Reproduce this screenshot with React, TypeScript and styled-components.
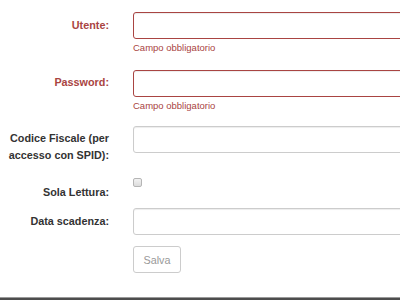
import React from "react";
import styled, { createGlobalStyle } from "styled-components";

const GlobalStyle = createGlobalStyle`
    html, body {
        margin: 0;
        padding: 0;
        background: #fff;
        overflow: hidden;
    }
    body {
        font-family: "Liberation Sans", Arial, sans-serif;
        color: #333;
    }
`;

const Page = styled.div`
    width: 400px;
    height: 300px;
    display: flex;
    flex-direction: column;
    overflow: hidden;
`;

const Form = styled.form`
    padding-top: 12px;
    display: flex;
    flex-direction: column;
`;

const Group = styled.div<{ $gap?: number }>`
    display: grid;
    grid-template-columns: 121px 300px;
    column-gap: 12px;
    align-items: start;
    margin-bottom: ${({ $gap }) => ($gap ?? 14)}px;
`;

const Label = styled.label<{ $error?: boolean; $top?: number }>`
    text-align: right;
    padding-right: 12px;
    padding-top: ${({ $top }) => ($top ?? 5)}px;
    font-size: 10.8px;
    line-height: 17px;
    font-weight: bold;
    color: ${({ $error }) => ($error ? "#a94442" : "#333")};
`;

const Control = styled.div`
    display: flex;
    flex-direction: column;
`;

const Input = styled.input<{ $error?: boolean }>`
    box-sizing: border-box;
    width: 100%;
    height: 27px;
    margin: 0;
    padding: 4px 9px;
    border: 1px solid ${({ $error }) => ($error ? "#a94442" : "#ccc")};
    border-radius: 3px;
    background: #fff;
    font-family: inherit;
    font-size: 10.8px;
    box-shadow: inset 0 1px 1px rgba(0, 0, 0, 0.075);
    outline: none;
`;

const Help = styled.span`
    display: block;
    margin-top: 3px;
    font-size: 9.5px;
    line-height: 12px;
    color: #a94442;
`;

const Check = styled.input`
    appearance: none;
    box-sizing: border-box;
    width: 9px;
    height: 9px;
    margin: 2px 0 0 0;
    border: 1px solid #b5b5b5;
    border-radius: 2px;
    background: linear-gradient(#f2f2f2, #dcdcdc);
`;

const Button = styled.button`
    box-sizing: border-box;
    width: 48px;
    height: 27px;
    padding: 0;
    border: 1px solid #ccc;
    border-radius: 3px;
    background: #fff;
    color: #999;
    font-family: inherit;
    font-size: 10.8px;
`;

const Footer = styled.div`
    margin-top: auto;
    height: 2px;
    background: #4d4d4d;
    border-top: 1px solid #9a9a9a;
`;

export default function App() {
    return (
        <Page>
            <GlobalStyle />
            <Form onSubmit={(e) => e.preventDefault()}>
                <Group $gap={16}>
                    <Label $error>Utente:</Label>
                    <Control>
                        <Input $error type="text" />
                        <Help>Campo obbligatorio</Help>
                    </Control>
                </Group>
                <Group $gap={14}>
                    <Label $error $top={4}>Password:</Label>
                    <Control>
                        <Input $error type="password" />
                        <Help>Campo obbligatorio</Help>
                    </Control>
                </Group>
                <Group $gap={12}>
                    <Label $top={4}>Codice Fiscale (per accesso con SPID):</Label>
                    <Control>
                        <Input type="text" />
                    </Control>
                </Group>
                <Group $gap={7}>
                    <Label $top={8}>Sola Lettura:</Label>
                    <Control>
                        <Check type="checkbox" />
                    </Control>
                </Group>
                <Group $gap={11}>
                    <Label>Data scadenza:</Label>
                    <Control>
                        <Input type="text" />
                    </Control>
                </Group>
                <Group $gap={0}>
                    <span />
                    <Control>
                        <Button type="submit" disabled>Salva</Button>
                    </Control>
                </Group>
            </Form>
            <Footer />
        </Page>
    );
}
